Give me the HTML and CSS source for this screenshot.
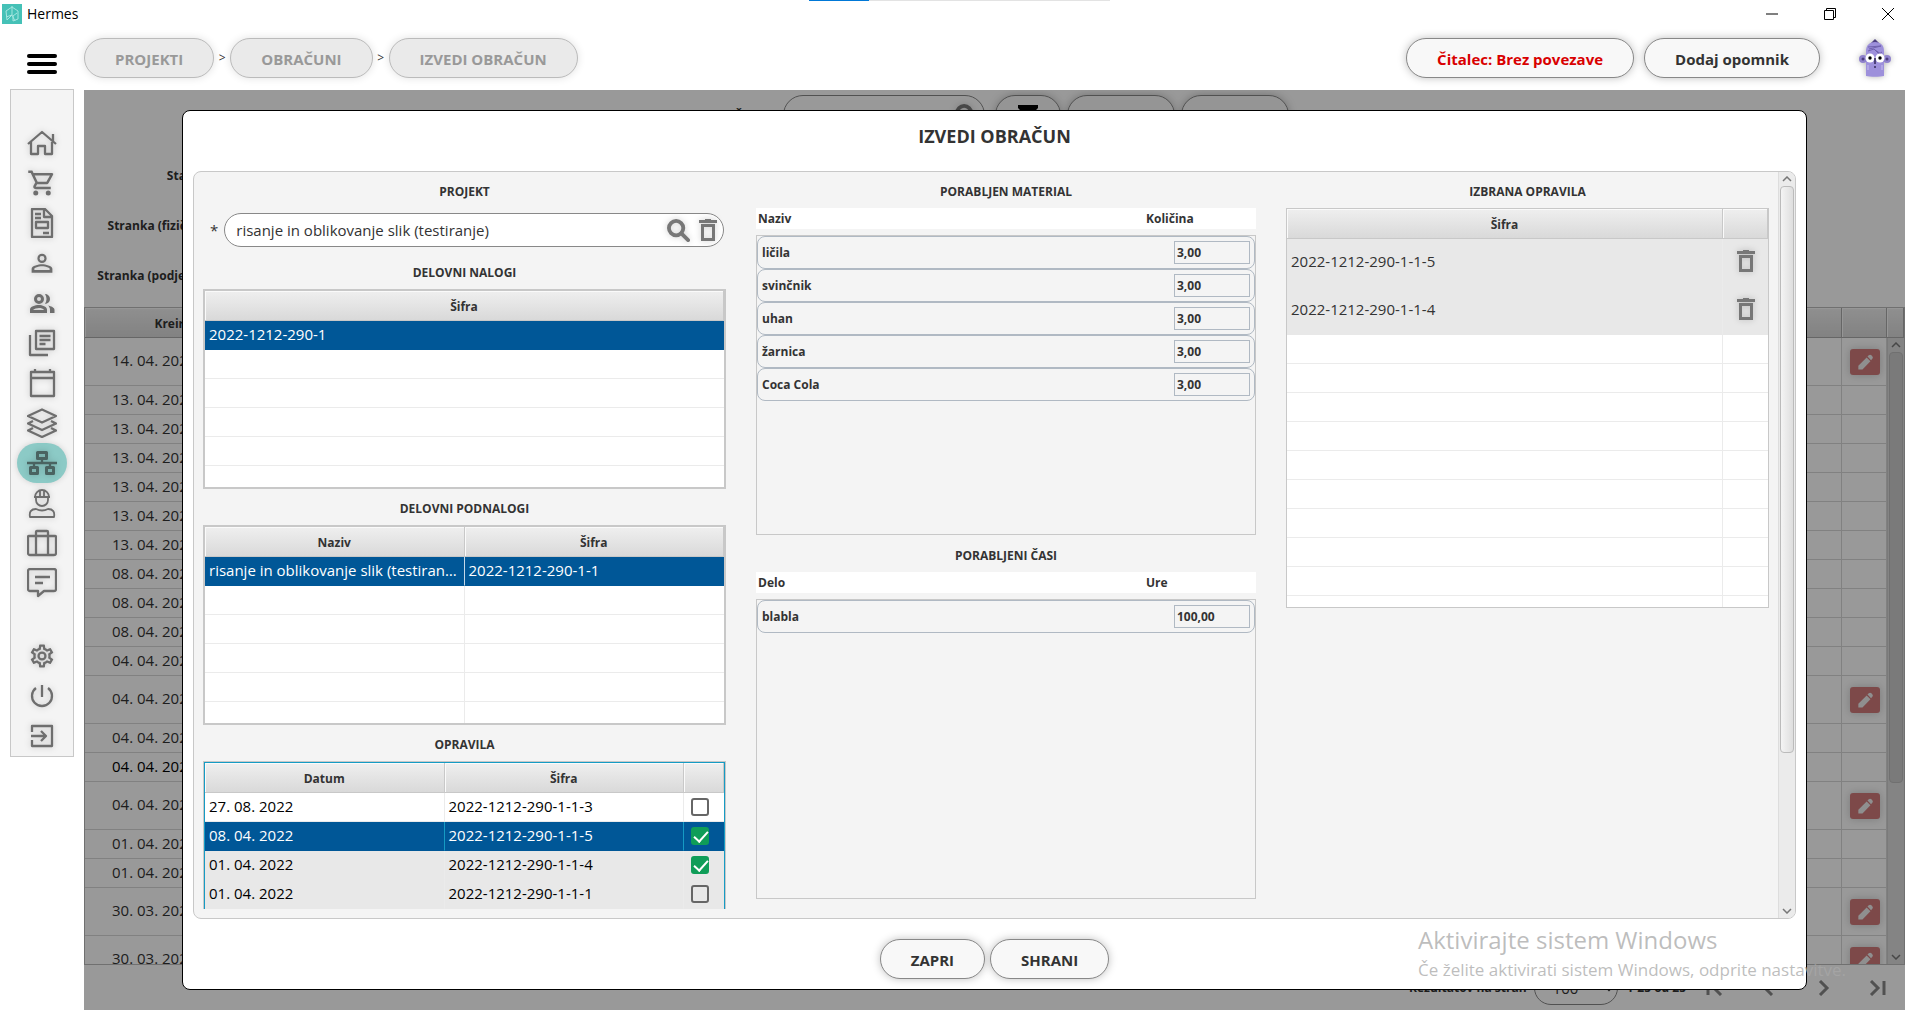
FILE: index.html
```html
<!DOCTYPE html>
<html lang="sl">
<head>
  <meta charset="UTF-8"/>
  <meta name="viewport" content="width=device-width, initial-scale=1.0"/>
  <title>Hermes</title>
  <link rel="stylesheet" href="styles.css">
</head>

<body>
<!-- Shared icons -->
<svg class="sprite" aria-hidden="true">
  <symbol id="i-trash" viewBox="0 0 18 22"><path d="M6 0h6v1h6v3H0V1h6zM2 5h14v17H2zM5 8v11h8V8z" fill-rule="evenodd"/></symbol>
  <symbol id="i-search" viewBox="0 0 24 24"><circle cx="9.500" cy="9.500" r="7.500" fill="none" stroke="currentColor" stroke-width="4"/><path d="M15 15l7 7" stroke="currentColor" stroke-width="4" stroke-linecap="round"/></symbol>
  <symbol id="i-pencil" viewBox="0 0 24 24"><path d="M4 21v-4.500L14 6.500l4.500 4.500L9 21zM15 5.500l1.500-1.500c1-1 2.300-1 3.200 0l1 1c1 1 1 2.200 0 3.200L19.300 10z"/></symbol>
</svg>

<div class="load-bar"><span></span></div>

<header class="titlebar">
  <svg class="app-icon" viewBox="0 0 20 20"><path d="M0 0h20v20H0z" fill="#45c1b7"/><path d="M10 2v9l-5 5-1-9 6-4 6 4v8l-5 2v-5l4-3M4 13l6-2 3 6" fill="none" stroke="#a5e6e0" stroke-width="1"/></svg>
  <h1>Hermes</h1>
  <div class="window-buttons">
    <button type="button" aria-label="Minimiraj"><svg viewBox="0 0 12 12"><path d="M0 6h12"/></svg></button>
    <button type="button" aria-label="Obnovi"><svg viewBox="0 0 12 12"><path d="M.5 2.500h9v9h-9zM2.500 2.500v-2h9v9h-2"/></svg></button>
    <button type="button" aria-label="Zapri okno"><svg viewBox="0 0 12 12"><path d="M0 0l12 12M12 0L0 12"/></svg></button>
  </div>
</header>

<div class="toolbar">
  <button class="menu-btn" type="button" aria-label="Meni"><i></i><i></i><i></i></button>
  <nav class="breadcrumbs">
    <button class="pill" type="button" disabled>PROJEKTI</button><span>&gt;</span>
    <button class="pill" type="button" disabled>OBRAČUNI</button><span>&gt;</span>
    <button class="pill" type="button" disabled>IZVEDI OBRAČUN</button>
  </nav>
  <div class="actions">
    <button class="pill reader" type="button">Čitalec: Brez povezave</button>
    <button class="pill" type="button">Dodaj opomnik</button>
    <svg class="avatar" viewBox="0 0 32 38">
      <path d="M12 4l4-4 4 4v4h-8z" fill="#4d3f80"/>
      <circle cx="4" cy="20" r="4" fill="#8f82cc"/><circle cx="28" cy="20" r="4" fill="#8f82cc"/>
      <path d="M7 37V12c0-6 4-9 9-9s9 3 9 9v25c-4 1-14 1-18 0z" fill="#9d90db"/>
      <path d="M9 8l13-1M10 10l12-3M9 12l6-2 5 5 3-2M16 11l6 4" stroke="#6f61ad" fill="none"/>
      <circle cx="4" cy="20" r="1.500" fill="#4d3f80"/><circle cx="28" cy="20" r="1.500" fill="#4d3f80"/>
      <circle cx="11" cy="19" r="4.500" fill="#fff"/><circle cx="21" cy="19" r="4.500" fill="#fff"/>
      <circle cx="11" cy="19" r="1.700"/><circle cx="21" cy="19" r="1.700"/>
      <path d="M16 19v6M15 28h2" stroke="#33295c" stroke-width="1.500"/>
      <path d="M9 26v5M23 26v5" stroke="#c5bcf0"/>
    </svg>
  </div>
</div>

<div class="workspace">
  <!-- Sidebar -->
  <nav class="sidebar">
    <a href="#" aria-label="Domov"><svg viewBox="0 0 30 30"><path d="M1 16L15 4l14 12M26 13V6M4 14v12h7v-8h7v8h7V14"/></svg></a>
    <a href="#" aria-label="Nakup"><svg class="fill" viewBox="0 0 24 24"><path d="M15.550 13c.75 0 1.410-.41 1.750-1.030l3.580-6.490A1 1 0 0 0 20 4H5.210l-.94-2H1v2h2l3.600 7.590-1.350 2.440C4.520 15.370 5.480 17 7 17h12v-2H7l1.100-2zM6.160 6h12.150l-2.760 5H8.530z" fill-rule="evenodd"/><circle cx="7" cy="20" r="2"/><circle cx="17" cy="20" r="2"/></svg></a>
    <a href="#" aria-label="Dokumenti"><svg viewBox="0 0 30 30"><path d="M5 1h13l7 7v21H5zM17 2v7h7M8 6h6M8 10h6M9 14h12v6H9zM16 25h6"/></svg></a>
    <a href="#" aria-label="Oseba"><svg class="fill" viewBox="0 0 26 26"><path d="M13 6.900a2.100 2.100 0 1 1 0 4.200 2.100 2.100 0 0 1 0-4.200m0 9c2.970 0 6.600 1.460 6.600 2.100v1H6.400v-1c0-.64 3.630-2.100 6.600-2.100M13 5a4 4 0 1 0 0 8 4 4 0 0 0 0-8zm0 9c-3 0-9 1.340-9 4v3.500h18V18c0-2.660-6-4-9-4z" fill-rule="evenodd"/></svg></a>
    <a href="#" aria-label="Stranke"><svg class="fill" viewBox="0 0 30 30"><path d="M12 6a5 5 0 1 0 0 10 5 5 0 0 0 0-10zm0 3a2 2 0 1 1 0 4 2 2 0 0 1 0-4zM12 17c-4 0-9 1.500-9 4.500V25h17v-3.500c0-3-5-4.500-8-4.500zm0 3c2 0 4 .5 5 2H6c1-1.300 4-2 6-2zM18 6a5 5 0 0 1 0 10c2-3 2-7 0-10zM21 17.500c3 .8 6.500 2 6.500 4.500v3H23v-3c0-2-.8-3.500-2-4.500z" fill-rule="evenodd"/></svg></a>
    <a href="#" aria-label="Poročila"><svg viewBox="0 0 30 30"><path d="M9 3h18v18H9zM3 7v20h18M12.500 8h11M12.500 12h11M12.500 16h6"/></svg></a>
    <a href="#" aria-label="Koledar"><svg viewBox="0 0 30 30"><path d="M4 4h23v24H4zM4 10h23M8 4V1M23 4V1"/></svg></a>
    <a href="#" aria-label="Zaloga"><svg viewBox="0 0 30 30"><path d="M15 1.500L29 8l-14 6.500L1 8zM6 13l-5 2.500L15 22l14-6.500L24 13M6 20l-5 2.500L15 29l14-6.500L24 20"/></svg></a>
    <a href="#" class="active" aria-label="Projekti"><svg viewBox="0 0 30 30"><path d="M0 15h30M7 15v4M23 15v4M15 11v4" /><path d="M10.500 4.500h9v6h-9zM3.500 19.500h7v6h-7zM19.500 19.500h7v6h-7z" stroke-width="3"/></svg></a>
    <a href="#" aria-label="Zaposleni"><svg class="thin" viewBox="0 0 30 30"><path d="M7 9h16M9 9v3a6 6 0 0 0 12 0V9M8 9a7 7 0 0 1 14 0M13 2v6M17 2v6M3 29c-1-5 1-8 6-8 4 2 8 2 12 0 5 0 7 3 6 8z"/></svg></a>
    <a href="#" aria-label="Poslovanje"><svg viewBox="0 0 30 30"><path d="M2 8h26c1 0 1 1 1 1v16c0 1-1 2-2 2H3c-1 0-2-1-2-2V9s0-1 1-1zM9 27V4c0-1 1-1 1-1h10s1 0 1 1v23"/></svg></a>
    <a href="#" aria-label="Sporočila"><svg viewBox="0 0 30 30"><path d="M3 1h24c1 0 2 1 2 2v18c0 1-1 2-2 2H17l-6 5v-5H3c-1 0-2-1-2-2V3c0-1 1-2 2-2zM8 9h15M8 15h8"/></svg></a>
    <a href="#" class="gap" aria-label="Nastavitve"><svg class="fill" viewBox="-1 -1 26 26"><path d="M19.430 12.980c.04-.32.07-.64.07-.98s-.03-.66-.07-.98l2.110-1.650c.19-.15.24-.42.12-.64l-2-3.460a.5.5 0 0 0-.61-.22l-2.490 1c-.52-.4-1.080-.73-1.690-.98l-.38-2.650A.49.49 0 0 0 14 2h-4c-.25 0-.46.18-.49.42l-.38 2.650c-.61.25-1.170.59-1.690.98l-2.490-1a.5.5 0 0 0-.61.22l-2 3.460c-.13.22-.07.49.12.64l2.110 1.650c-.04.32-.07.65-.07.98s.03.66.07.98l-2.110 1.650c-.19.15-.24.42-.12.64l2 3.460a.5.5 0 0 0 .61.22l2.490-1c.52.4 1.080.73 1.690.98l.38 2.650c.03.24.24.42.49.42h4c.25 0 .46-.18.49-.42l.38-2.650c.61-.25 1.170-.59 1.690-.98l2.490 1a.5.5 0 0 0 .61-.22l2-3.460c.12-.22.07-.49-.12-.64zm-1.980-1.710c.05.500.05.960 0 1.460l-.14 1.130 1.970 1.540-.7 1.210-2.310-.93-.9.680c-.43.320-.84.560-1.250.73l-1.060.43-.36 2.480h-1.400l-.35-2.480-1.060-.43c-.43-.18-.83-.41-1.230-.71l-.91-.7-2.330.94-.7-1.210 1.970-1.540-.14-1.130c-.05-.5-.05-.97 0-1.470l.14-1.130-1.970-1.540.7-1.210 2.310.93.900-.68c.43-.32.840-.56 1.250-.73l1.060-.43.360-2.480h1.390l.35 2.480 1.060.43c.43.180.83.410 1.230.71l.91.700 2.330-.94.700 1.210-1.960 1.550zM12 8a4 4 0 1 0 0 8 4 4 0 0 0 0-8zm0 6a2 2 0 1 1 0-4 2 2 0 0 1 0 4z" fill-rule="evenodd"/></svg></a>
    <a href="#" aria-label="Ugasni"><svg viewBox="0 0 30 30"><path d="M15 4v12M9 7a10 10 0 1 0 12 0"/></svg></a>
    <a href="#" aria-label="Odjava"><svg viewBox="0 0 30 30"><path d="M5 11V5h20v20H5v-6M4 15h14M14 10l5 5-5 5"/></svg></a>
  </nav>

  <main class="content">
    <!-- List of bills under the dialog -->
    <div class="search-row">
      <label for="listSearch">DELO ŠT.:</label>
      <div class="field list-search"><input id="listSearch" type="text"><svg class="icon"><use href="#i-search"/></svg></div>
      <button class="pill filter-btn" type="button" aria-label="Filter"><svg viewBox="0 0 20 20"><path d="M0 0h20v3l-7 7v9l-6-4v-5L0 3z"/></svg></button>
      <button class="pill list-btn" type="button">NOV</button>
      <button class="pill list-btn" type="button">IZVOZ</button>
    </div>
    <div class="list-filters">
      <span>Status</span>
      <span>Stranka (fizična)</span>
      <span>Stranka (podjetje)</span>
    </div>

    <div class="list">
      <table class="grid list-table">
        <colgroup><col class="c-created"><col><col class="c-edit"><col class="c-bar"></colgroup>
        <thead><tr><th>Kreirano</th><th></th><th></th><th></th></tr></thead>
        <tbody>
          <tr class="tall"><td>14. 04. 2022</td><td></td><td><button class="edit" type="button" aria-label="Uredi"><svg><use href="#i-pencil"/></svg></button></td><td></td></tr>
          <tr><td>13. 04. 2022</td><td></td><td></td><td></td></tr>
          <tr><td>13. 04. 2022</td><td></td><td></td><td></td></tr>
          <tr><td>13. 04. 2022</td><td></td><td></td><td></td></tr>
          <tr><td>13. 04. 2022</td><td></td><td></td><td></td></tr>
          <tr><td>13. 04. 2022</td><td></td><td></td><td></td></tr>
          <tr><td>13. 04. 2022</td><td></td><td></td><td></td></tr>
          <tr><td>08. 04. 2022</td><td></td><td></td><td></td></tr>
          <tr><td>08. 04. 2022</td><td></td><td></td><td></td></tr>
          <tr><td>08. 04. 2022</td><td></td><td></td><td></td></tr>
          <tr><td>04. 04. 2022</td><td></td><td></td><td></td></tr>
          <tr class="tall"><td>04. 04. 2022</td><td></td><td><button class="edit" type="button" aria-label="Uredi"><svg><use href="#i-pencil"/></svg></button></td><td></td></tr>
          <tr><td>04. 04. 2022</td><td></td><td></td><td></td></tr>
          <tr class="current"><td>04. 04. 2022</td><td></td><td></td><td></td></tr>
          <tr class="tall"><td>04. 04. 2022</td><td></td><td><button class="edit" type="button" aria-label="Uredi"><svg><use href="#i-pencil"/></svg></button></td><td></td></tr>
          <tr><td>01. 04. 2022</td><td></td><td></td><td></td></tr>
          <tr><td>01. 04. 2022</td><td></td><td></td><td></td></tr>
          <tr class="tall"><td>30. 03. 2022</td><td></td><td><button class="edit" type="button" aria-label="Uredi"><svg><use href="#i-pencil"/></svg></button></td><td></td></tr>
          <tr class="tall"><td>30. 03. 2022</td><td></td><td><button class="edit" type="button" aria-label="Uredi"><svg><use href="#i-pencil"/></svg></button></td><td></td></tr>
        </tbody>
      </table>
      <div class="scrollbar list-bar">
        <svg viewBox="0 0 10 6"><path d="M1 5l4-4 4 4"/></svg>
        <div class="track"><div class="thumb"></div></div>
        <svg viewBox="0 0 10 6"><path d="M1 1l4 4 4-4"/></svg>
      </div>
    </div>

    <div class="pager">
      <label for="pageSize">Rezultatov na stran</label>
      <select id="pageSize" class="field"><option>100</option></select>
      <span>1-25 od 25</span>
      <div class="pager-nav">
        <button type="button" aria-label="Prva"><svg viewBox="0 0 18 16"><path d="M2 1v14M15 1L8 8l7 7"/></svg></button>
        <button type="button" aria-label="Prejšnja"><svg viewBox="0 0 18 16"><path d="M12 1L5 8l7 7"/></svg></button>
        <button type="button" aria-label="Naslednja"><svg viewBox="0 0 18 16"><path d="M6 1l7 7-7 7"/></svg></button>
        <button type="button" aria-label="Zadnja"><svg viewBox="0 0 18 16"><path d="M3 1l7 7-7 7M16 1v14"/></svg></button>
      </div>
    </div>

    <!-- Dialog -->
    <div class="overlay">
      <section class="modal" role="dialog" aria-labelledby="modalTitle">
        <h2 id="modalTitle">IZVEDI OBRAČUN</h2>

        <div class="panel">
          <div class="panel-body">
            <div class="column">
              <h3><label for="project">PROJEKT</label></h3>
              <div class="project-row">
                <span>*</span>
                <div class="field">
                  <input id="project" type="text" value="risanje in oblikovanje slik (testiranje)">
                  <button class="icon-btn" type="button" aria-label="Išči"><svg class="icon"><use href="#i-search"/></svg></button>
                  <button class="icon-btn" type="button" aria-label="Počisti"><svg class="icon trash"><use href="#i-trash"/></svg></button>
                </div>
              </div>

              <h3>DELOVNI NALOGI</h3>
              <div class="grid-box">
                <table class="grid">
                  <thead><tr><th>Šifra</th></tr></thead>
                  <tbody>
                    <tr class="selected"><td>2022-1212-290-1</td></tr>
                    <tr><td></td></tr>
                    <tr><td></td></tr>
                    <tr><td></td></tr>
                    <tr><td></td></tr>
                    <tr><td></td></tr>
                  </tbody>
                </table>
              </div>

              <h3>DELOVNI PODNALOGI</h3>
              <div class="grid-box">
                <table class="grid">
                  <thead><tr><th>Naziv</th><th>Šifra</th></tr></thead>
                  <tbody>
                    <tr class="selected"><td>risanje in oblikovanje slik (testiranje)</td><td>2022-1212-290-1-1</td></tr>
                    <tr><td></td><td></td></tr>
                    <tr><td></td><td></td></tr>
                    <tr><td></td><td></td></tr>
                    <tr><td></td><td></td></tr>
                    <tr><td></td><td></td></tr>
                  </tbody>
                </table>
              </div>

              <h3>OPRAVILA</h3>
              <div class="grid-box focused">
                <table class="grid">
                  <colgroup><col><col><col class="c-check"></colgroup>
                  <thead><tr><th>Datum</th><th>Šifra</th><th></th></tr></thead>
                  <tbody>
                    <tr><td>27. 08. 2022</td><td>2022-1212-290-1-1-3</td><td><input type="checkbox" aria-label="2022-1212-290-1-1-3"></td></tr>
                    <tr class="selected"><td>08. 04. 2022</td><td>2022-1212-290-1-1-5</td><td><input type="checkbox" aria-label="2022-1212-290-1-1-5" checked></td></tr>
                    <tr class="done"><td>01. 04. 2022</td><td>2022-1212-290-1-1-4</td><td><input type="checkbox" aria-label="2022-1212-290-1-1-4" checked></td></tr>
                    <tr class="done"><td>01. 04. 2022</td><td>2022-1212-290-1-1-1</td><td><input type="checkbox" aria-label="2022-1212-290-1-1-1"></td></tr>
                  </tbody>
                </table>
              </div>
            </div>

            <div class="column">
              <h3>PORABLJEN MATERIAL</h3>
              <div class="list-head"><span>Naziv</span><span>Količina</span></div>
              <div class="items">
                <div class="item"><label for="m1">ličila</label><input id="m1" type="text" value="3,00"></div>
                <div class="item"><label for="m2">svinčnik</label><input id="m2" type="text" value="3,00"></div>
                <div class="item"><label for="m3">uhan</label><input id="m3" type="text" value="3,00"></div>
                <div class="item"><label for="m4">žarnica</label><input id="m4" type="text" value="3,00"></div>
                <div class="item"><label for="m5">Coca Cola</label><input id="m5" type="text" value="3,00"></div>
              </div>

              <h3>PORABLJENI ČASI</h3>
              <div class="list-head"><span>Delo</span><span>Ure</span></div>
              <div class="items">
                <div class="item"><label for="t1">blabla</label><input id="t1" type="text" value="100,00"></div>
              </div>
            </div>

            <div class="column">
              <h3>IZBRANA OPRAVILA</h3>
              <div class="grid-box picked">
                <table class="grid">
                  <colgroup><col><col class="c-trash"></colgroup>
                  <thead><tr><th>Šifra</th><th></th></tr></thead>
                  <tbody>
                    <tr class="tall done"><td>2022-1212-290-1-1-5</td><td><button class="icon-btn" type="button" aria-label="Odstrani"><svg class="icon trash"><use href="#i-trash"/></svg></button></td></tr>
                    <tr class="tall done"><td>2022-1212-290-1-1-4</td><td><button class="icon-btn" type="button" aria-label="Odstrani"><svg class="icon trash"><use href="#i-trash"/></svg></button></td></tr>
                    <tr><td></td><td></td></tr>
                    <tr><td></td><td></td></tr>
                    <tr><td></td><td></td></tr>
                    <tr><td></td><td></td></tr>
                    <tr><td></td><td></td></tr>
                    <tr><td></td><td></td></tr>
                    <tr><td></td><td></td></tr>
                    <tr><td></td><td></td></tr>
                    <tr><td></td><td></td></tr>
                    <tr><td></td><td></td></tr>
                  </tbody>
                </table>
              </div>
            </div>
          </div>
          <div class="scrollbar">
            <svg viewBox="0 0 10 6"><path d="M1 5l4-4 4 4"/></svg>
            <div class="track"><div class="thumb"></div></div>
            <svg viewBox="0 0 10 6"><path d="M1 1l4 4 4-4"/></svg>
          </div>
        </div>

        <footer class="modal-footer">
          <button class="pill" type="button">ZAPRI</button>
          <button class="pill" type="button">SHRANI</button>
        </footer>
      </section>
    </div>
  </main>
</div>

<!-- Windows activation notice -->
<div class="watermark">
  <p class="big">Aktivirajte sistem Windows</p>
  <p>Če želite aktivirati sistem Windows, odprite nastavitve.</p>
</div>
</body>
</html>
```
FILE: styles.css
```css
:root{
  --text:#333;
  --icon:#6e6e6e;
  --line:#c8c8c8;
  --row-line:#ebebeb;
  --panel:#f4f4f4;
  --select:#005797;
  --shadow:0 0 8px rgba(0,0,0,.25);
}
*{margin:0;padding:0;box-sizing:border-box}
body{
  display:flex;
  flex-direction:column;
  height:100vh;
  overflow:hidden;
  background:#fff;
  color:var(--text);
  font:15px/20px "Open Sans","Noto Sans",sans-serif;
}
button,input,select{font:inherit;color:inherit}
button{border:none;background:none}
svg{display:block}
.sprite{display:none}

/* Title bar */
.load-bar{
  position:absolute;
  top:0;
  left:809px;
  width:301px;
  height:1px;
  background:#e3e3e3;
}
.load-bar span{display:block;width:20%;height:1px;background:#0078d7}
.titlebar{display:flex;align-items:center;height:28px;padding:0 3px 0 2px}
.app-icon{width:20px;height:20px}
.titlebar h1{margin-left:5px;font-size:14px;font-weight:400;color:#000}
.window-buttons{display:flex;margin-left:auto}
.window-buttons button{display:flex;justify-content:center;width:58px}
.window-buttons svg{width:12px;height:12px;fill:none;stroke:#000}

/* Toolbar */
.toolbar{display:flex;align-items:center;height:62px;padding:0 29px 2px 27px}
.menu-btn{width:30px;padding-top:16px}
.menu-btn i{display:block;height:4px;margin-bottom:4px;border-radius:2px;background:#000}
.breadcrumbs{display:flex;align-items:center;margin-left:27px}
.breadcrumbs span{width:16px;text-align:center;font-size:12px;line-height:22px}
.pill{
  height:40px;
  padding:2px 30px 0;
  border:1px solid #888;
  border-radius:20px;
  background:#f8f8f8;
  box-shadow:var(--shadow);
  font-weight:700;
}
.pill:disabled{background:#eaeaea;border-color:#bbb;color:#999;box-shadow:0 0 8px rgba(0,0,0,.12)}
.actions{display:flex;align-items:center;gap:10px;margin-left:auto}
.pill.reader{color:#d90000}
.avatar{width:32px;height:38px;margin-left:29px;filter:drop-shadow(0 0 3px rgba(0,0,0,.3))}

/* Sidebar */
.workspace{display:flex;flex:1;min-height:0;padding:0 15px 12px 10px}
.sidebar{
  align-self:flex-start;
  width:64px;
  margin:-1px 10px 0 0;
  padding:33px 0 0;
  border:1px solid var(--line);
  background:var(--panel);
}
.sidebar a{
  display:flex;
  align-items:center;
  justify-content:center;
  width:50px;
  height:40px;
  margin:0 auto;
  border-radius:20px;
  color:var(--icon);
}
.sidebar a.gap{margin-top:33px}
.sidebar a.active{background:#8ccac6;color:#4a6361;box-shadow:0 0 6px rgba(0,0,0,.15)}
.sidebar svg{
  width:30px;
  height:30px;
  fill:none;
  stroke:currentColor;
  stroke-width:2.3;
  stroke-linejoin:round;
  filter:drop-shadow(0 0 3px rgba(0,0,0,.2));
}
.sidebar svg.fill{fill:currentColor;stroke:none}
.sidebar svg.thin{stroke-width:1.8}

/* Content */
.content{
  position:relative;
  display:flex;
  flex-direction:column;
  flex:1;
  min-width:0;
  overflow:hidden;
}
.search-row{display:flex;align-items:center;justify-content:center;gap:6px;padding-top:5px;font-size:12px}
.search-row label{width:76px;padding-top:2px;font-weight:700}
.field{
  display:flex;
  align-items:center;
  height:34px;
  padding:0 6px 0 11px;
  border:1px solid #888;
  border-radius:17px;
  background:#fff;
}
.field input{flex:1;min-width:0;border:none;outline:none;background:none}
.list-search{width:202px;height:40px;margin-right:4px;border-radius:20px}
.search-row .list-btn{width:108px}
.search-row .filter-btn{width:66px;padding:0 22px}
.filter-btn svg{width:20px;height:20px;fill:#000}
.list-filters{
  display:flex;
  flex-direction:column;
  gap:30px;
  width:121px;
  height:172px;
  padding-top:31px;
  font-size:12px;
  font-weight:700;
  text-align:right;
  white-space:nowrap;
}
.icon{width:23px;height:23px;color:#777;fill:#777;filter:drop-shadow(0 0 3px rgba(0,0,0,.2))}
.icon.trash{width:18px;height:22px}
.icon-btn{display:flex;margin-left:9px}

/* Tables */
.grid{width:100%;table-layout:fixed;border-collapse:separate;border-spacing:0}
.grid th{
  height:30px;
  padding-top:2px;
  border-right:1px solid var(--line);
  border-bottom:1px solid var(--line);
  background:linear-gradient(#efefef,#d9d9d9);
  box-shadow:inset 1px 1px #fafafa;
  color:var(--text);
  font-size:12px;
  font-weight:700;
}
.grid td{
  height:29px;
  padding:0 4px 2px;
  border-right:1px solid var(--row-line);
  border-bottom:1px solid var(--row-line);
  overflow:hidden;
  white-space:nowrap;
  text-overflow:ellipsis;
}
.grid td:last-child{border-right:none}
.grid .tall td{height:48px;padding-bottom:3px}
.grid .done td{background:#e8e8e8;border-bottom-color:#e8e8e8}
.grid .selected td{background:var(--select);border-bottom-color:var(--select);border-right-color:#c4d8e8;color:#fff}
.grid-box{height:200px;border:2px solid var(--line);background:#fff;overflow:hidden}
.grid-box.focused{border-width:1px;box-shadow:inset 0 0 0 1px #159bc4;padding:1px;color:#000}
.grid .selected td:last-child{border-right:none}
.focused .grid .selected td{border-right-color:#159bc4}
.grid-box.picked{height:400px;border-width:1px}
.c-check{width:40px}
.c-trash{width:45px}
.grid input[type=checkbox]{
  appearance:none;
  display:block;
  width:18px;
  height:18px;
  margin:1px 0 0 3px;
  border:2px solid #666;
  border-radius:3px;
}
.grid input[type=checkbox]:checked{border-color:#0f9d58;background:#0f9d58}
.grid input[type=checkbox]:checked::after{
  content:"";
  display:block;
  width:6px;
  height:12px;
  margin:-1px 0 0 4px;
  border:solid #fff;
  border-width:0 2px 2px 0;
  transform:rotate(42deg);
}
.picked .icon-btn{margin-left:10px}

.list{
  display:flex;
  flex:1;
  position:relative;
  min-height:0;
  overflow:hidden;
  border:1px solid #bbb;
}
.list-table{align-self:flex-start}
.list-table th{border-color:#aaa}
.list-table td{border-color:#d8d8d8}
.list-table td:first-child{padding-left:27px}
.list-table td:nth-child(3){padding:0 8px;text-overflow:clip}
.list-table .current{color:#000}
.c-created{width:192px}
.c-edit{width:45px}
.c-bar{width:17px}
.edit{display:block;width:30px;height:26px;padding:3px 5px;border-radius:3px;background:#d07a7a;box-shadow:0 0 8px rgba(0,0,0,.2)}
.edit svg{width:20px;height:20px;fill:#eee}

/* Scroll bars */
.scrollbar{
  display:flex;
  flex-direction:column;
  align-items:center;
  width:17px;
  padding:4px 0;
  border-left:1px solid #ddd;
  background:#ebebeb;
}
.scrollbar svg{width:10px;height:6px;fill:none;stroke:#777;stroke-width:1.5}
.track{flex:1;width:14px;padding:4px 0}
.thumb{
  height:79%;
  border:1px solid #bbb;
  border-radius:4px;
  background:linear-gradient(90deg,#f4f4f4,#dedede);
}
.list-bar{position:absolute;top:30px;right:0;bottom:0;background:#ddd;border-color:#ccc}
.list-bar .thumb{height:72%;background:#ccc}

/* Pager */
.pager{display:flex;align-items:center;height:45px;padding-right:19px;justify-content:flex-end;font-size:12px;font-weight:700}
.pager .field{width:84px;margin:0 9px 0 7px;padding-left:14px;font-size:15px;font-weight:400}
.pager-nav{display:flex;gap:36px;margin-left:20px}
.pager-nav svg{width:18px;height:16px;fill:none;stroke:#888;stroke-width:3}

/* Dialog */
.overlay{
  position:absolute;
  inset:0;
  display:flex;
  padding:20px 98px;
  background:rgba(0,0,0,.4);
}
.modal{
  display:flex;
  flex-direction:column;
  flex:1;
  min-width:0;
  border:1px solid #000;
  border-radius:8px;
  background:#fff;
}
.modal h2{height:60px;padding-top:15px;font-size:18px;font-weight:700;text-align:center}
.panel{
  display:flex;
  flex:1;
  min-height:0;
  margin:0 10px;
  border:1px solid var(--line);
  border-radius:8px;
  background:var(--panel);
  overflow:hidden;
}
.panel-body{
  display:grid;
  grid-template-columns:523fr 500fr 483fr;
  gap:30px;
  flex:1;
  margin:0 9px 9px;
  overflow:hidden;
}
.column{min-width:0}
.column h3{height:36px;font-size:12px;line-height:40px;font-weight:700;text-align:center}
.project-row{display:flex;align-items:center;gap:6px;padding:5px 2px 6px 7px}
.project-row .field{flex:1}
.list-head{
  display:flex;
  height:21px;
  margin-bottom:6px;
  padding:0 2px;
  background:#fff;
  font-size:12px;
  line-height:22px;
  font-weight:700;
}
.list-head span{flex:388}
.list-head span + span{flex:108}
.items{height:300px;margin-bottom:1px;border:1px solid var(--line)}
.item{
  display:flex;
  align-items:center;
  justify-content:space-between;
  height:33px;
  padding:0 4px;
  border:1px solid #b0b9c3;
  border-radius:8px;
  font-size:12px;
  font-weight:700;
}
.item input{width:76px;height:23px;padding:0 2px;border:1px solid #b0b9c3;background:none}
.modal-footer{display:flex;justify-content:center;gap:5px;height:70px;padding-top:20px}

/* Windows notice */
.watermark{
  position:absolute;
  right:74px;
  bottom:37px;
  color:rgba(168,168,168,.75);
  font-size:17px;
  line-height:30px;
  pointer-events:none;
}
.watermark .big{font-size:24px}
```
